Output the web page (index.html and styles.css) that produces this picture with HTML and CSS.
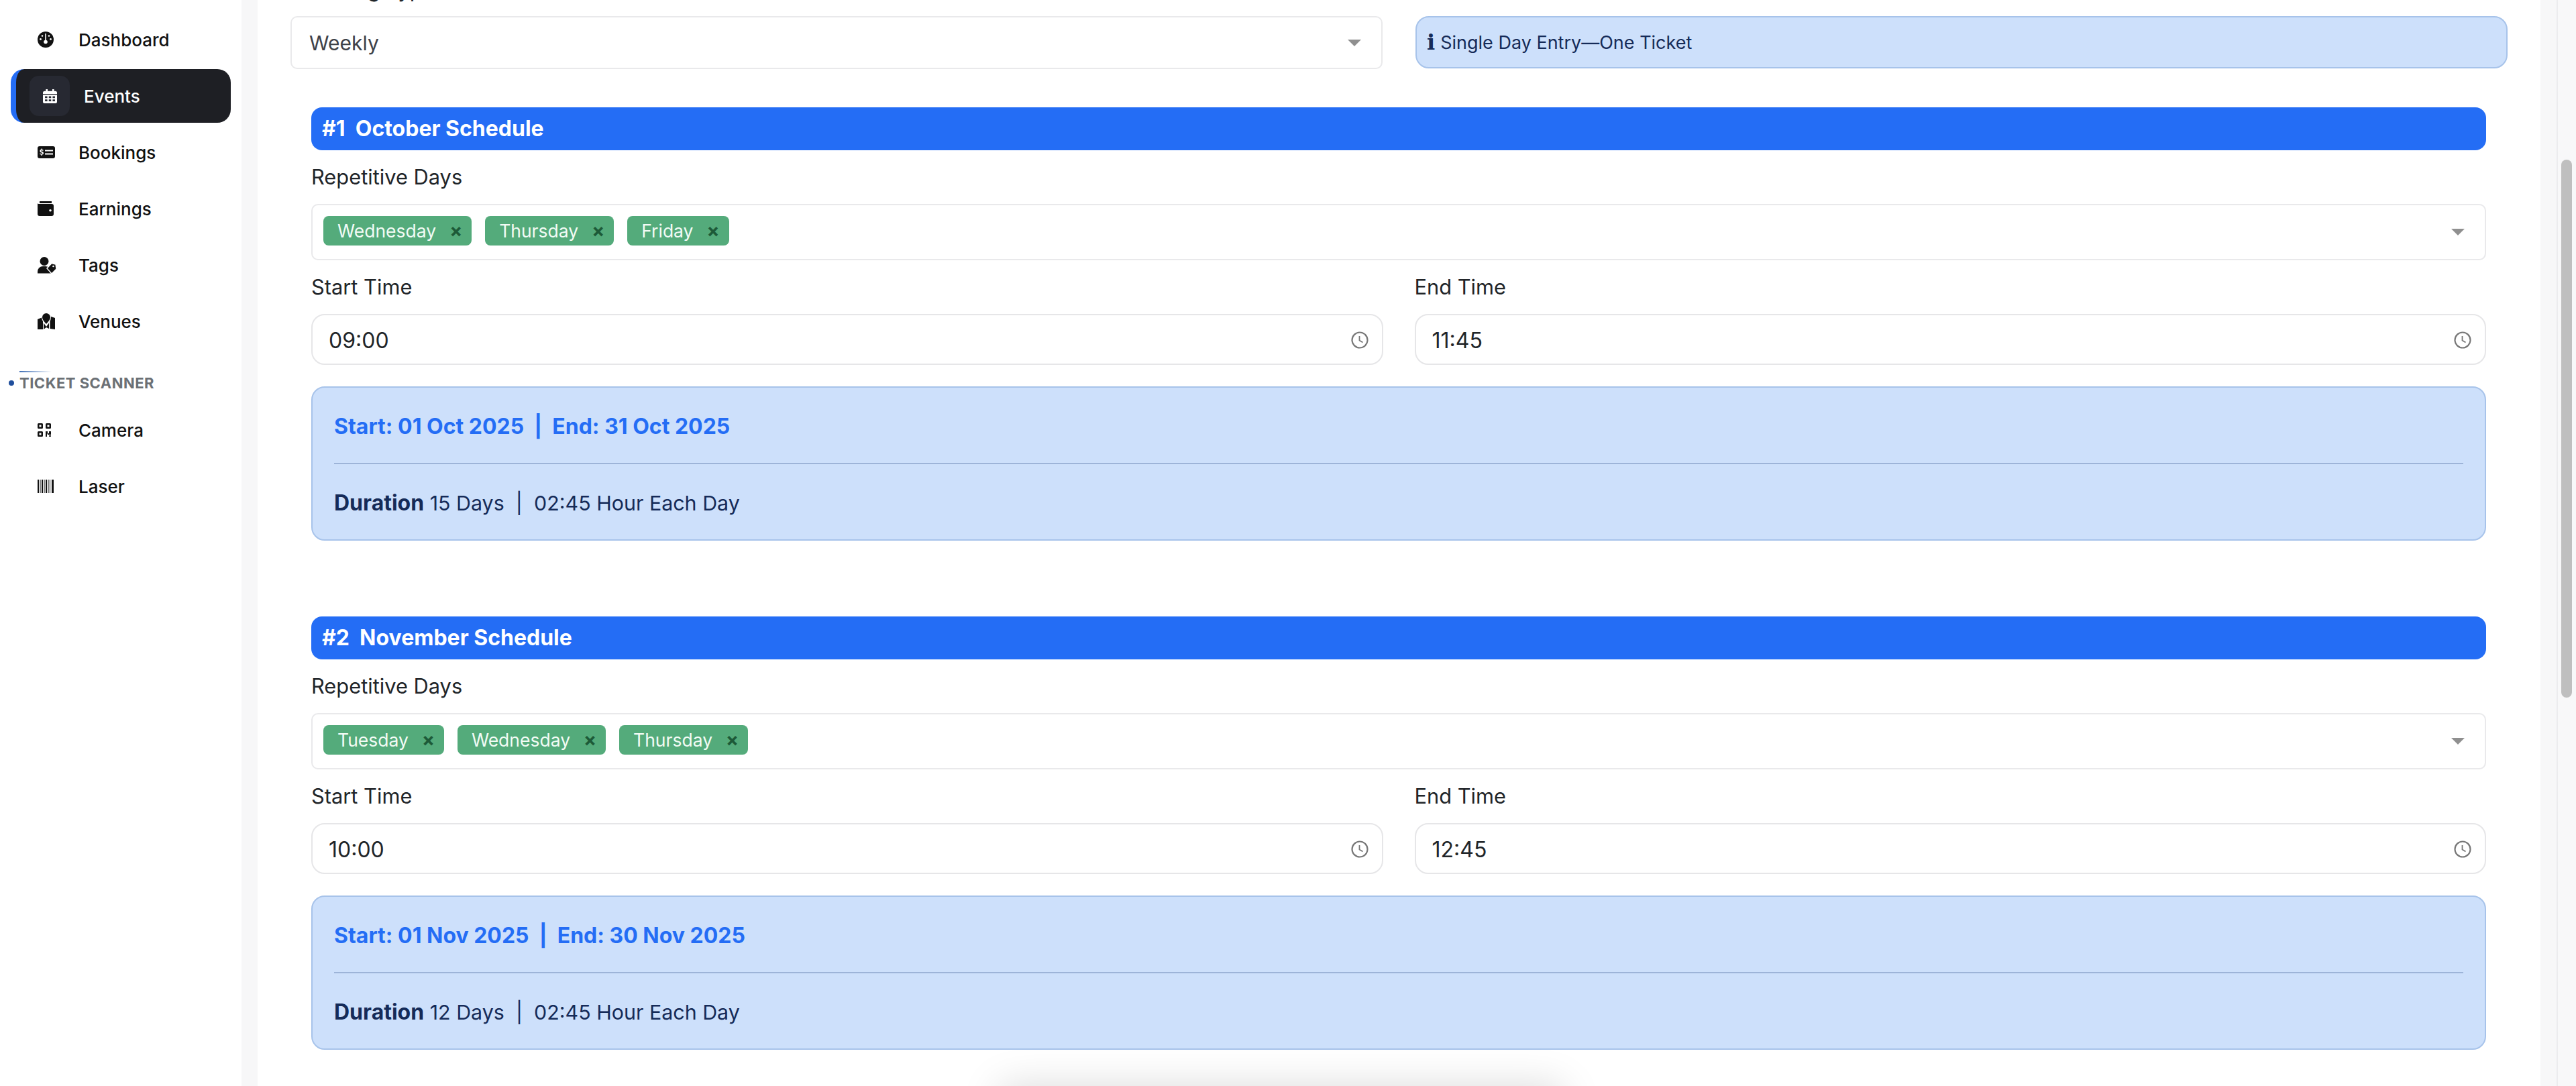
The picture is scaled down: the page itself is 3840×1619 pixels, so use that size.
FILE: index.html
```html
<!DOCTYPE html>
<html lang="en">
<head>
<meta charset="utf-8">
<title>Events</title>
<link rel="stylesheet" href="styles.css">
</head>
<body>
<div class="app">
  <aside class="sidebar">
    <nav class="nav">
      <a class="nav-item"><svg class="ico" viewBox="0 0 24 24"><circle cx="12" cy="12" r="12" fill="#111"/><path d="M11.200 3h1.600v10h-1.600z" fill="#fff"/><circle cx="12" cy="15.500" r="2.800" fill="#fff"/><circle cx="4.500" cy="11.500" r="1.400" fill="#fff"/><circle cx="19.500" cy="11.500" r="1.400" fill="#fff"/><circle cx="7" cy="6.500" r="1.300" fill="#fff"/><circle cx="17" cy="6.500" r="1.300" fill="#fff"/></svg><span>Dashboard</span></a>
      <a class="nav-item active"><span class="ico-box"><svg class="ico-cal" viewBox="0 0 24 24"><path d="M5 0h3v3h8V0h3v3h2a3 3 0 0 1 3 3v2H0V6a3 3 0 0 1 3-3h2z" fill="#fff"/><path fill-rule="evenodd" d="M0 9.500h24V21a3 3 0 0 1-3 3H3a3 3 0 0 1-3-3zM3.500 12v3h4v-3zm6.500 0v3h4v-3zm6.500 0v3h4v-3zM3.500 17.500v3h4v-3zm6.500 0v3h4v-3zm6.500 0v3h4v-3z" fill="#fff"/></svg></span><span>Events</span></a>
      <a class="nav-item"><svg class="ico wide" viewBox="0 0 26 18"><path fill-rule="evenodd" d="M3 0h20a3 3 0 0 1 3 3v12a3 3 0 0 1-3 3H3a3 3 0 0 1-3-3V3a3 3 0 0 1 3-3zm8 5.500v2h12v-2zm0 5v2h12v-2zM5.600 3.500v1.300C4.200 5 3.400 6 3.400 7.200c0 1.300 1 2 2.400 2.300 1 .2 1.400.5 1.400 1s-.5.8-1.300.8-1.500-.3-2.100-.8l-.7 1.200c.6.500 1.400.8 2.300.9v1.300h1.300v-1.300c1.500-.2 2.300-1.200 2.300-2.400 0-1.400-1-2-2.400-2.300-1-.2-1.400-.4-1.400-.9s.4-.7 1.100-.7c.6 0 1.200.2 1.800.6l.7-1.200c-.6-.4-1.200-.6-1.900-.7V3.500z" fill="#111"/></svg><span>Bookings</span></a>
      <a class="nav-item"><svg class="ico" viewBox="0 0 24 22"><path fill-rule="evenodd" d="M3 0h18v3H3zM3 4h18a3 3 0 0 1 3 3v12a3 3 0 0 1-3 3H3a3 3 0 0 1-3-3V3c0 .6 1.300 1 3 1zm16 8a1.800 1.800 0 1 0 0 3.600 1.800 1.800 0 0 0 0-3.600z" fill="#111"/></svg><span>Earnings</span></a>
      <a class="nav-item"><svg class="ico widest" viewBox="0 0 28 25"><circle cx="10" cy="6.500" r="6.500" fill="#111"/><path d="M0 24.500V22a8 8 0 0 1 8-8h4a8 8 0 0 1 6 3l2 7.500z" fill="#111"/><path fill-rule="evenodd" d="M14 17l7-7.500 6 1.500 1 7-7 7z" fill="#111" stroke="#fff" stroke-width="1.400"/><circle cx="23.500" cy="14" r="1.300" fill="#fff"/></svg><span>Tags</span></a>
      <a class="nav-item"><svg class="ico wide" viewBox="0 0 26 24"><path d="M0 9l6-2.500c.4 2.500 1.300 4.500 2 5.500v12l-8 0zM20 5l6 2v17l-7.500-1V12c.8-1.500 1.400-4 1.500-7z" fill="#111"/><path d="M13 0a6 6 0 0 1 6 6c0 3-3 7-6 10-3-3-6-7-6-10a6 6 0 0 1 6-6zM9 14.500l4 5.500 4-5.500V23l-4-2-4 3z" fill="#111"/></svg><span>Venues</span></a>
    </nav>
    <div class="section-title"><span class="section-line"></span><span class="section-dot"></span><span>TICKET SCANNER</span></div>
    <nav class="nav">
      <a class="nav-item"><svg class="ico small" viewBox="0 0 20 20"><path fill-rule="evenodd" d="M1.500 0h5A1.500 1.500 0 0 1 8 1.500v5A1.500 1.500 0 0 1 6.500 8h-5A1.500 1.500 0 0 1 0 6.500v-5A1.500 1.500 0 0 1 1.500 0zm1 2.500v3h3v-3zM13.500 0h5A1.500 1.500 0 0 1 20 1.500v5A1.500 1.500 0 0 1 18.500 8h-5A1.500 1.500 0 0 1 12 6.500v-5A1.500 1.500 0 0 1 13.500 0zm1 2.500v3h3v-3zM1.500 12h5A1.500 1.500 0 0 1 8 13.500v5A1.500 1.500 0 0 1 6.500 20h-5A1.500 1.500 0 0 1 0 18.500v-5A1.500 1.500 0 0 1 1.500 12zm1 2.500v3h3v-3zM12 12h3v3h2v-3h3v5h-5v-1.500h-1V20h-2zM17 18h1.500v2H17zM19 18h1v2h-1z" fill="#111"/></svg><span>Camera</span></a>
      <a class="nav-item"><svg class="ico" viewBox="0 0 24 20"><path d="M0 0h2v20H0zM3.500 0h1v20h-1zM6 0h2v20H6zM9.500 0h1v20h-1zM12 0h2v20h-2zM15.500 0h1v20h-1zM18 0h1v20h-1zM21 0h3v20h-3z" fill="#111"/></svg><span>Laser</span></a>
    </nav>
  </aside>
  <div class="gutter"></div>
  <main class="main">
    <div class="content">
      <div class="top-row">
        <div class="col">
          <label class="top-label">Ticketing Type</label>
          <div class="select-single"><span>Weekly</span><i class="caret"></i></div>
        </div>
        <div class="col col-info">
          <div class="info-note"><span class="info-i">i</span><span>Single Day Entry—One Ticket</span></div>
        </div>
      </div>

      <section class="schedule">
        <h3 class="schedule-head">#1&nbsp; October Schedule</h3>
        <label class="field-label days-label">Repetitive Days</label>
        <div class="multi">
          <span class="tag">Wednesday<b>×</b></span>
          <span class="tag">Thursday<b>×</b></span>
          <span class="tag">Friday<b>×</b></span>
          <i class="caret"></i>
        </div>
        <div class="time-row">
          <div class="col">
            <label class="field-label">Start Time</label>
            <div class="time-input"><span>09:00</span><svg class="clock" viewBox="0 0 26 26"><circle cx="13" cy="13" r="11.500" fill="none" stroke="#777" stroke-width="2.200"/><path d="M12.500 7v6.500l5 3" fill="none" stroke="#777" stroke-width="1.800"/></svg></div>
          </div>
          <div class="col">
            <label class="field-label">End Time</label>
            <div class="time-input"><span>11:45</span><svg class="clock" viewBox="0 0 26 26"><circle cx="13" cy="13" r="11.500" fill="none" stroke="#777" stroke-width="2.200"/><path d="M12.500 7v6.500l5 3" fill="none" stroke="#777" stroke-width="1.800"/></svg></div>
          </div>
        </div>
        <div class="summary">
          <p class="summary-dates">Start: 01 Oct 2025&nbsp; |&nbsp; End: 31 Oct 2025</p>
          <hr class="summary-rule">
          <p class="summary-dur"><strong>Duration</strong> 15 Days&nbsp; |&nbsp; 02:45 Hour Each Day</p>
        </div>
      </section>

      <section class="schedule">
        <h3 class="schedule-head">#2&nbsp; November Schedule</h3>
        <label class="field-label days-label">Repetitive Days</label>
        <div class="multi">
          <span class="tag">Tuesday<b>×</b></span>
          <span class="tag">Wednesday<b>×</b></span>
          <span class="tag">Thursday<b>×</b></span>
          <i class="caret"></i>
        </div>
        <div class="time-row">
          <div class="col">
            <label class="field-label">Start Time</label>
            <div class="time-input"><span>10:00</span><svg class="clock" viewBox="0 0 26 26"><circle cx="13" cy="13" r="11.500" fill="none" stroke="#777" stroke-width="2.200"/><path d="M12.500 7v6.500l5 3" fill="none" stroke="#777" stroke-width="1.800"/></svg></div>
          </div>
          <div class="col">
            <label class="field-label">End Time</label>
            <div class="time-input"><span>12:45</span><svg class="clock" viewBox="0 0 26 26"><circle cx="13" cy="13" r="11.500" fill="none" stroke="#777" stroke-width="2.200"/><path d="M12.500 7v6.500l5 3" fill="none" stroke="#777" stroke-width="1.800"/></svg></div>
          </div>
        </div>
        <div class="summary">
          <p class="summary-dates">Start: 01 Nov 2025&nbsp; |&nbsp; End: 30 Nov 2025</p>
          <hr class="summary-rule">
          <p class="summary-dur"><strong>Duration</strong> 12 Days&nbsp; |&nbsp; 02:45 Hour Each Day</p>
        </div>
      </section>
    </div>
    <div class="toast-shadow"></div>
  </main>
  <div class="gutter"></div>
  <div class="scrollbar"><div class="thumb"></div></div>
</div>
</body>
</html>
```
FILE: styles.css
```css
* { box-sizing: border-box; }
html, body { margin: 0; height: 100%; overflow: hidden; background: #fff; }
body { font-family: Inter, "Liberation Sans", sans-serif; color: #212529; }
.app { display: flex; height: 1619px; width: 3840px; overflow: hidden; }

.sidebar { width: 360px; flex: none; padding: 19px 16px 0; background: #fff; }
.nav { display: flex; flex-direction: column; gap: 4px; }
.nav-item { height: 80px; display: flex; align-items: center; gap: 37px; padding-left: 40px; font-size: 26px; font-weight: 500; color: #111; }
.ico { width: 24px; height: 24px; flex: none; }
.ico.wide { width: 26px; margin-right: -2px; }
.ico.widest { width: 28px; height: 25px; margin-right: -4px; }
.ico.small { width: 20px; height: 20px; margin-right: 4px; }
.nav-item.active { background: #1e1f24; color: #fff; border-radius: 20px; border-left: 8px solid #246df5; padding-left: 20px; gap: 21px; }
.ico-box { width: 60px; height: 60px; border-radius: 14px; background: #272932; display: flex; align-items: center; justify-content: center; flex: none; }
.ico-cal { width: 21px; height: 23px; }

.section-title { position: relative; display: flex; align-items: center; gap: 8px; margin: 38px 0 16px; height: 28px; font-size: 22px; font-weight: 700; letter-spacing: 0.5px; color: #6b7075; }
.section-dot { width: 8px; height: 8px; border-radius: 50%; background: #1f4e9c; margin-left: -3px; }
.section-line { position: absolute; left: 13px; top: -4px; width: 48px; height: 2px; background: linear-gradient(90deg, #3f6eb5, rgba(63,110,181,0)); }

.gutter { width: 24px; flex: none; background: #f7f7f8; }
.main { position: relative; flex: 1; min-width: 0; background: #fff; overflow: hidden; }
.content { padding: 0 0 0 80px; width: 3322px; margin-top: -35px; }

.top-row { display: flex; gap: 49px; margin-left: -31px; width: 3305px; }
.col { flex: 1 1 0; min-width: 0; }
.col-info { padding-top: 59px; }
.top-label { display: block; height: 59px; font-size: 30.800px; line-height: 40px; color: #212529; }
.select-single { height: 79px; border: 2px solid #e9e9eb; border-radius: 10px; display: flex; align-items: center; justify-content: space-between; padding: 0 30px 0 26px; font-size: 30px; color: #3d4148; }
.caret { width: 0; height: 0; border-left: 10px solid transparent; border-right: 10px solid transparent; border-top: 10px solid #8f8f8f; flex: none; }
.info-note { height: 78px; border: 2px solid #a7c3ea; border-radius: 20px; background: #cde0fb; display: flex; align-items: center; gap: 8px; padding-left: 15px; font-size: 27px; color: #152b58; }
.info-i { font-family: "DejaVu Serif", serif; font-weight: 700; font-size: 32px; }

.schedule { margin-top: 57px; margin-bottom: 113px; }
.schedule-head { margin: 0; height: 64px; border-radius: 16px; background: #246df5; color: #fff; font-size: 32px; font-weight: 700; line-height: 64px; padding-left: 16px; }
.field-label { display: block; font-size: 30.800px; line-height: 40px; color: #212529; }
.days-label { margin: 20px 0 20px; }
.multi { height: 84px; border: 2px solid #e9e9eb; border-radius: 10px; display: flex; align-items: center; gap: 20px; padding: 0 30px 4px 16px; }
.multi .caret { margin-left: auto; margin-top: 4px; }
.tag { height: 44px; display: inline-flex; align-items: center; background: #54ab7b; color: #f2fbf5; border-radius: 8px; padding: 0 14px 0 21px; font-size: 26.500px; }
.tag b { margin-left: 20px; color: #1d5a38; font-size: 28px; font-weight: 700; line-height: 1; }
.time-row { display: flex; gap: 47px; margin-top: 20px; }
.time-row .field-label { margin-bottom: 20px; }
.time-input { height: 76px; border: 2px solid #e6e6e8; border-radius: 20px; display: flex; align-items: center; justify-content: space-between; padding: 2px 20px 0 24px; font-size: 32px; color: #212529; }
.clock { width: 26px; height: 26px; flex: none; }
.summary { margin-top: 32px; height: 230px; border: 2px solid #a7c3ea; border-radius: 20px; background: #cde0fb; padding: 0 32px; }
.summary-dates { margin: 0; padding-top: 37px; height: 112px; font-size: 32px; line-height: 42px; font-weight: 700; color: #246df5; }
.summary-rule { margin: 0; border: 0; height: 2px; background: #9db4d8; }
.summary-dur { margin: 0; padding-top: 37px; font-size: 30.400px; line-height: 42px; color: #152b58; }
.summary-dur strong { font-weight: 700; font-size: 32px; }

.toast-shadow { position: absolute; left: 1106px; top: 1619px; width: 840px; height: 60px; box-shadow: 0 0 60px rgba(0,0,0,.15); border-radius: 10px; background: #e8e8e8; }

.scrollbar { width: 29px; flex: none; background: #f8f8f9; border-left: 2px solid #ececee; position: relative; }
.thumb { position: absolute; left: 5px; top: 238px; width: 16px; height: 802px; border-radius: 8px; background: #bfbfbf; }
```
